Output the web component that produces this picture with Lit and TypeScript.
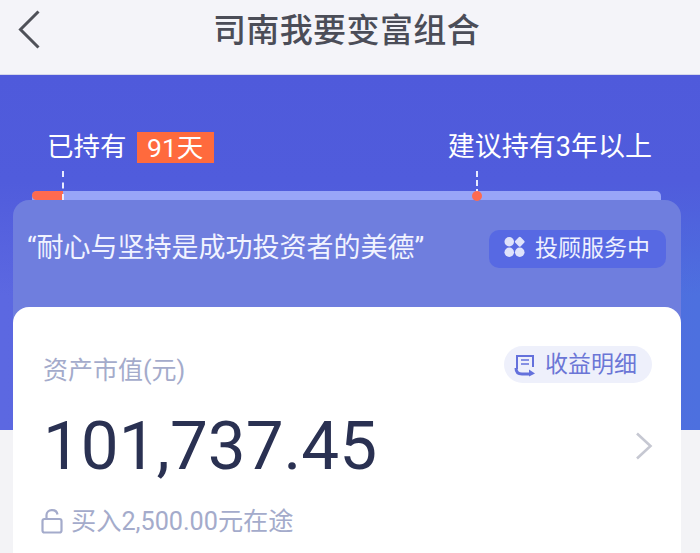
import { LitElement, html, css } from "lit";
import { customElement } from "lit/decorators.js";

@customElement("app-root")
export class AppRoot extends LitElement {
  static styles = css`
    :host {
      display: block;
      width: 700px;
      height: 553px;
      overflow: hidden;
      background: #f3f3f6;
      font-family: Roboto, "Noto Sans CJK SC", sans-serif;
      color: #fff;
    }
    .nav {
      box-sizing: border-box;
      background: #f4f4f9;
      border-bottom: 1px solid #d5d7ea;
      height: 75px;
      display: grid;
      grid-template-columns: 1fr auto 1fr;
      align-items: center;
    }
    .back {
      display: block;
      width: 24px;
      height: 40px;
      margin: -15px 0 0 18px;
    }
    .title {
      font-size: 33px;
      font-weight: 500;
      letter-spacing: 0.4px;
      color: #4b4d58;
      line-height: 40px;
      margin: -13px 7px 0 0;
      white-space: nowrap;
    }
    .hero {
      height: 355px;
      background:
        linear-gradient(180deg, #4f5adb 0%, #505cdc 30%, rgba(80, 92, 220, 0) 62%),
        linear-gradient(90deg, #5c68e1 0%, #5767df 50%, #4d70df 100%);
      padding-top: 54px;
      box-sizing: border-box;
    }
    .labels {
      display: flex;
      justify-content: space-between;
      align-items: center;
      height: 36px;
      padding: 0 48px 0 47px;
      font-size: 27px;
      line-height: 36px;
    }
    .held {
      display: flex;
      align-items: center;
      gap: 10px;
      font-size: 26.5px;
    }
    .tag {
      background: #ff6a3d;
      height: 31px;
      line-height: 31px;
      padding: 0 10.5px;
    }
    .track {
      position: relative;
      margin: 26px 39px 0 32px;
      height: 9px;
      border-radius: 5px 5px 0 0;
      background: #98a5f8;
    }
    .fill {
      width: 31px;
      height: 9px;
      border-radius: 5px 0 0 5px;
      background: #fe6a50;
    }
    .dash {
      position: absolute;
      bottom: 0;
      width: 0;
      height: 29px;
      border-left: 2px dashed #e8ebff;
    }
    .dash.a { left: 30px; }
    .dash.b { left: 444px; bottom: 5px; height: 24px; }
    .dot {
      position: absolute;
      left: 440px;
      top: -0.5px;
      width: 10px;
      height: 10px;
      border-radius: 50%;
      background: #fe6a50;
    }
    .panel {
      margin: 0 19px 0 13px;
      background: #6f7ede;
      border-radius: 16px 16px 0 0;
    }
    .quote-row {
      height: 107px;
      box-sizing: border-box;
      display: flex;
      justify-content: space-between;
      align-items: flex-start;
      padding: 30px 15px 0 14px;
    }
    .quote {
      font-size: 27px;
      line-height: 38px;
      color: #f1f3ff;
      white-space: nowrap;
      margin-top: -1px;
    }
    .service {
      display: flex;
      align-items: center;
      gap: 10px;
      height: 38px;
      padding: 0 16px 0 15px;
      border-radius: 10px;
      background: #5769e3;
      font-size: 23px;
      color: #eef0ff;
    }
    .service svg { display: block; margin-bottom: 5px; }
    .service span { margin-bottom: 6px; }
    .card {
      height: 250px;
      box-sizing: border-box;
      background: #fff;
      border-radius: 16px 16px 0 0;
      padding: 39px 29px 0 30px;
    }
    .card-top {
      display: flex;
      justify-content: space-between;
      align-items: center;
      height: 37px;
    }
    .asset {
      font-size: 25px;
      color: #a4abcb;
      margin-top: 7px;
    }
    .detail {
      display: flex;
      align-items: center;
      gap: 9px;
      height: 37px;
      padding: 0 15px 0 10px;
      border-radius: 19px;
      background: #eef0fb;
      color: #6b76d6;
      font-size: 23px;
    }
    .detail svg { display: block; }
    .detail span { margin-bottom: 6px; }
    .amount-row {
      display: flex;
      justify-content: space-between;
      align-items: center;
      height: 80px;
      margin-top: 23px;
    }
    .amount {
      font-size: 67.4px;
      line-height: 80px;
      color: #2a3152;
    }
    .chev { display: block; margin: 0 -1px 0 0; }
    .pending {
      display: flex;
      align-items: center;
      gap: 8px;
      margin: 15px 0 0 -2px;
      height: 36px;
      font-size: 25.2px;
      color: #a4abcb;
    }
    .pending svg { display: block; margin-top: 3px; }
  `;

  render() {
    return html`
      <div class="nav">
        <svg class="back" viewBox="0 0 24 40" fill="none" stroke="#4f5159" stroke-width="3">
          <path d="M20.5 1.5 L2.5 19.5 L20.5 37.5" />
        </svg>
        <div class="title">司南我要变富组合</div>
        <span></span>
      </div>
      <div class="hero">
        <div class="labels">
          <div class="held">
            <span>已持有</span>
            <span class="tag">91天</span>
          </div>
          <span>建议持有3年以上</span>
        </div>
        <div class="track">
          <div class="fill"></div>
          <span class="dash a"></span>
          <span class="dash b"></span>
          <span class="dot"></span>
        </div>
        <div class="panel">
          <div class="quote-row">
            <span class="quote">“耐心与坚持是成功投资者的美德”</span>
            <div class="service">
              <svg width="21" height="24" viewBox="0 0 22 24" fill="#dfe3fb">
                <circle cx="5.5" cy="6.5" r="5" />
                <rect x="12.5" y="2.5" width="8" height="8" rx="1.5" transform="rotate(45 16.5 6.5)" />
                <circle cx="5.5" cy="17.5" r="5" />
                <circle cx="16.5" cy="17.5" r="5" />
              </svg>
              <span>投顾服务中</span>
            </div>
          </div>
          <div class="card">
            <div class="card-top">
              <span class="asset">资产市值(元)</span>
              <div class="detail">
                <svg width="22" height="24" viewBox="0 0 22 24" fill="none" stroke="#6471dc" stroke-width="2">
                  <path d="M3 16 V3 H19 V14" />
                  <path d="M7 7 H15 M7 11 H15" stroke-width="1.6" />
                  <path d="M2 15 C2 20 5 21 8 21 H16" stroke-width="3" />
                  <path d="M15 16.5 L21 20.5 L15 23.5 Z" fill="#6471dc" stroke="none" />
                </svg>
                <span>收益明细</span>
              </div>
            </div>
            <div class="amount-row">
              <span class="amount">101,737.45</span>
              <svg class="chev" width="18" height="28" viewBox="0 0 18 28" fill="none" stroke="#c6c8d2" stroke-width="2.6">
                <path d="M2 1.5 L15.5 14 L2 26.5" />
              </svg>
            </div>
            <div class="pending">
              <svg width="22" height="26" viewBox="0 0 22 26" fill="none" stroke="#a4abcb" stroke-width="2.2">
                <rect x="1.5" y="11" width="19" height="13.5" rx="2" />
                <path d="M5.5 11 V7 C5.5 1 15.5 0 16.5 6.5" />
              </svg>
              <span>买入2,500.00元在途</span>
            </div>
          </div>
        </div>
      </div>
    `;
  }
}
